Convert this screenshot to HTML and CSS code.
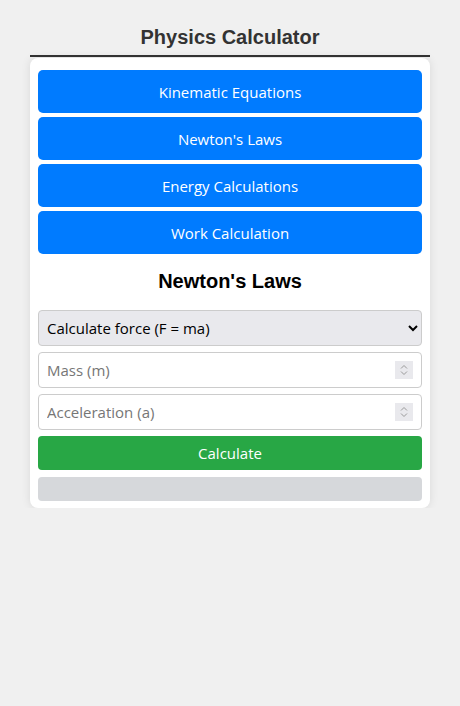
FILE: index.html
```html
<!DOCTYPE html>
<html>
<head>
<meta charset="utf-8">
<link rel="stylesheet" href="styles.css">
</head>
<body>
<div class="page">
  <h1 class="title">Physics Calculator</h1>
  <div class="card">
    <div class="menu">
      <button class="nav-btn">Kinematic Equations</button>
      <button class="nav-btn">Newton's Laws</button>
      <button class="nav-btn">Energy Calculations</button>
      <button class="nav-btn">Work Calculation</button>
    </div>
    <h2 class="section-title">Newton's Laws</h2>
    <div class="form">
      <select class="field select">
        <option>Calculate force (F = ma)</option>
      </select>
      <div class="input-wrap">
        <input class="field" type="number" placeholder="Mass (m)">
        <span class="spin"><svg width="18" height="18" viewBox="0 0 18 18"><polyline points="6,7.5 9,4.5 12,7.5" fill="none" stroke="#9a9a9a" stroke-width="1"/><polyline points="6,10.5 9,13.5 12,10.5" fill="none" stroke="#9a9a9a" stroke-width="1"/></svg></span>
      </div>
      <div class="input-wrap">
        <input class="field" type="number" placeholder="Acceleration (a)">
        <span class="spin"><svg width="18" height="18" viewBox="0 0 18 18"><polyline points="6,7.5 9,4.5 12,7.5" fill="none" stroke="#9a9a9a" stroke-width="1"/><polyline points="6,10.5 9,13.5 12,10.5" fill="none" stroke="#9a9a9a" stroke-width="1"/></svg></span>
      </div>
      <button class="calc-btn">Calculate</button>
      <div class="result"></div>
    </div>
  </div>
</div>
</body>
</html>
```
FILE: styles.css
```css
body {
  margin: 0;
  background: #f0f0f0;
  font-family: "Liberation Sans", Arial, sans-serif;
}
.page {
  width: 400px;
  margin: 0 auto;
  padding-top: 26px;
}
.title {
  margin: 0;
  text-align: center;
  font-size: 20px;
  color: #333;
  padding-bottom: 6px;
  border-bottom: 2px solid #333;
}
.card {
  margin-top: 1px;
  background: #fff;
  border-radius: 8px;
  box-shadow: 0 0 10px rgba(0,0,0,0.1);
  padding: 12px 8px 7px;
}
.menu {
  display: flex;
  flex-direction: column;
  gap: 4px;
}
.nav-btn {
  height: 43px;
  border: none;
  border-radius: 5px;
  background: #007bff;
  color: #fff;
  font-family: "Open Sans", sans-serif;
  font-size: 15px;
}
.section-title {
  margin: 16px 0 17px;
  text-align: center;
  font-size: 20px;
  color: #000;
}
.form {
  display: flex;
  flex-direction: column;
  gap: 6px;
}
.field {
  box-sizing: border-box;
  width: 100%;
  height: 36px;
  padding: 0 8px;
  border: 1px solid #ccc;
  border-radius: 4px;
  font-family: "Open Sans", sans-serif;
  font-size: 15px;
  background: #fff;
}
.field::placeholder {
  color: #767676;
}
.field::-webkit-inner-spin-button,
.field::-webkit-outer-spin-button {
  -webkit-appearance: none;
  margin: 0;
}
.input-wrap {
  position: relative;
  display: flex;
}
.spin {
  position: absolute;
  right: 9px;
  top: 9px;
  width: 18px;
  height: 18px;
  background: #e9e9ed;
  display: flex;
}
.select {
  padding-left: 4px;
  background: #e9e9ed;
  color: #000;
}
.calc-btn {
  height: 34px;
  border: none;
  border-radius: 4px;
  background: #28a745;
  color: #fff;
  font-family: "Open Sans", sans-serif;
  font-size: 15px;
}
.result {
  height: 24px;
  margin-top: 1px;
  border-radius: 4px;
  background: #d6d8db;
}
```
